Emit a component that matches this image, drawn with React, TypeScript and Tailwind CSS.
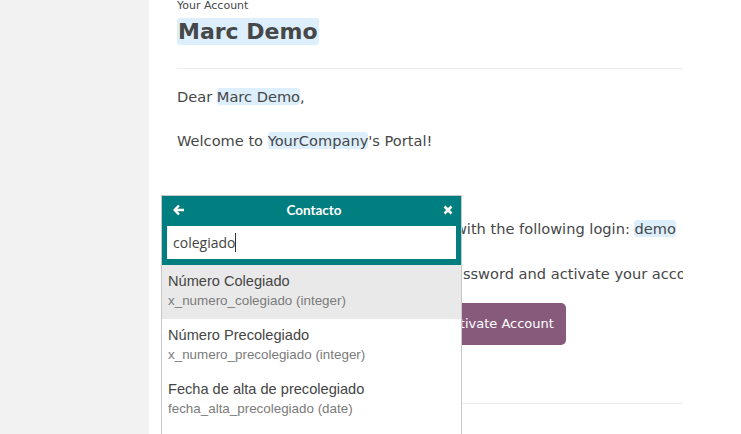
import React from 'react';

const hl = 'bg-[#ddeefc] rounded-[3px]';

const fields = [
  { label: 'Número Colegiado', name: 'x_numero_colegiado (integer)' },
  { label: 'Número Precolegiado', name: 'x_numero_precolegiado (integer)' },
  { label: 'Fecha de alta de precolegiado', name: 'fecha_alta_precolegiado (date)' },
];

function FieldPopover() {
  return (
    <div className="absolute left-[161px] top-[195px] w-[301px] h-[260px] border border-[#c8c8c8] bg-white font-['Liberation_Sans',Arial,sans-serif]">
      <div className="bg-[#017e7f] px-[5px] pb-[6px]">
        <div className="h-[30px] flex items-center justify-between pl-[6px] pr-[3px] text-white">
          <svg width="12" height="12" viewBox="0 0 12 12" className="mt-[-2px]">
            <path d="M6 1.5 L1.5 6 L6 10.5 M1.8 6 H11" stroke="white" strokeWidth="2.4" fill="none" strokeLinejoin="round" />
          </svg>
          <span className="font-['Lato',sans-serif] font-bold text-[13.5px] mt-[-2px]">Contacto</span>
          <svg width="10" height="10" viewBox="0 0 10 10" className="mt-[-2px]">
            <path d="M1.5 1.5 L8.5 8.5 M8.5 1.5 L1.5 8.5" stroke="white" strokeWidth="2.6" />
          </svg>
        </div>
        <div className="h-[33px] bg-white flex items-center px-[6px] font-['Open_Sans',sans-serif] text-[14px] text-[#444]">
          colegiado<span className="inline-block w-px h-[19px] bg-[#333]" />
        </div>
      </div>
      {fields.map((f, i) => (
        <div key={f.name} className={`h-[54px] px-[6px] pt-[6px] ${i === 0 ? 'bg-[#e9e9e9]' : ''}`}>
          <div className="text-[14.6px] leading-[20px] text-[#454545]">{f.label}</div>
          <div className="text-[13.4px] leading-[20px] text-[#7b7b7b]">{f.name}</div>
        </div>
      ))}
    </div>
  );
}

export default function App() {
  return (
    <div className="relative h-[434px] w-[741px] overflow-hidden flex font-['DejaVu_Sans',Verdana,sans-serif] text-[#454748]">
      <div className="w-[149px] bg-[#f2f2f2]" />
      <div className="flex-1 bg-white pl-[28px]">
        <div className="w-[506px] overflow-hidden">
          <div className="text-[11px] leading-[11px]">Your Account</div>
          <div className="mt-[7px] h-[28px] leading-[28px]">
            <span className={`${hl} text-[22px] font-bold px-[1px] py-[1px]`}>Marc Demo</span>
          </div>
          <div className="mt-[22px] h-px bg-[#ececec]" />
          <p className="mt-[18px] text-[14.6px] leading-[20px]">
            Dear <span className={hl}>Marc Demo</span>,
          </p>
          <p className="mt-[24px] text-[14.6px] leading-[20px]">
            Welcome to <span className={hl}>YourCompany</span>'s Portal!
          </p>
          <p className="mt-[68px] text-[14.6px] leading-[20px] whitespace-nowrap">
            Your portal account has been created with the following login: <span className={hl}>demo</span>
          </p>
          <p className="mt-[25px] pl-[9px] text-[14.6px] leading-[20px] whitespace-nowrap">
            Click on the button below to pick a password and activate your account.
          </p>
          <div className="mt-[19px] ml-[255px]">
            <span className="inline-flex items-center h-[42px] px-[12px] rounded-[5px] bg-[#875a7b] text-white text-[13px]">
              Activate Account
            </span>
          </div>
          <div className="mt-[58px] h-px bg-[#ececec]" />
        </div>
      </div>
      <FieldPopover />
    </div>
  );
}
